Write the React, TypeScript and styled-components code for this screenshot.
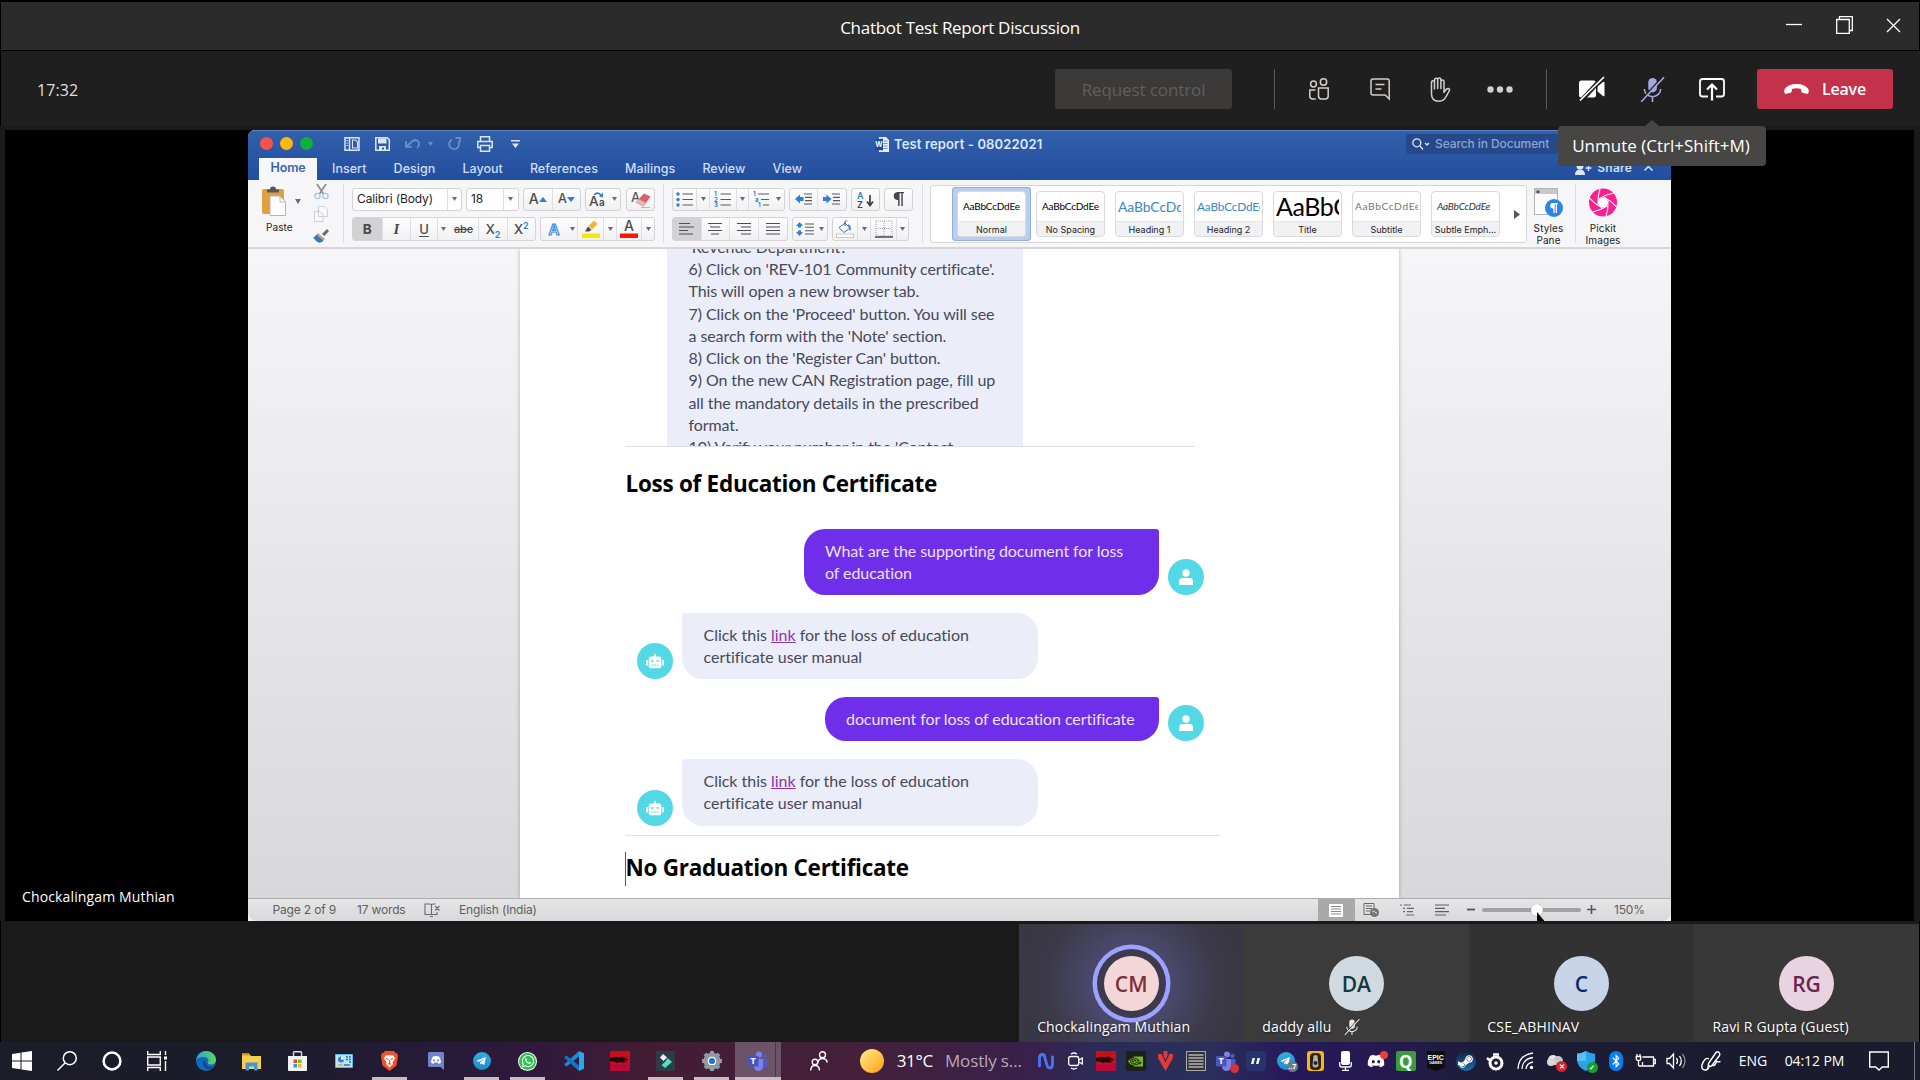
import React from 'react';
import styled, { createGlobalStyle, css } from 'styled-components';
import { FaBluetoothB, FaDiscord, FaRobot, FaSteamSymbol, FaTelegramPlane, FaWhatsapp } from 'react-icons/fa';
import { SiNvidia } from 'react-icons/si';

const segoe = '"Open Sans", "Noto Sans", sans-serif';
const sf = 'Inter, "Liberation Sans", sans-serif';
const lato = 'Lato, "Open Sans", sans-serif';

const Global = createGlobalStyle`
  *, *::before, *::after { box-sizing: border-box; }
  html, body { margin: 0; background: #000; }
  body { width: 1920px; height: 1080px; overflow: hidden; }
  svg { display: block; flex: none; }
`;

const Screen = styled.div`
  width: 1920px;
  height: 1080px;
  display: flex;
  flex-direction: column;
  background: #1a1a1a;
  font-family: ${segoe};
  color: #fff;
  overflow: hidden;
`;

const Glyph = styled.svg<{ $w: number; $h?: number }>`
  width: ${p => p.$w}px;
  height: ${p => p.$h ?? p.$w}px;
  overflow: visible;
`;

/* ---------- Meeting window ---------- */

const TitleBar = styled.header`
  height: 51px;
  flex: none;
  display: grid;
  grid-template-columns: 1fr auto 1fr;
  align-items: center;
  background: #2b2b2b;
  border: solid #000;
  border-width: 2px 1px 1px;
  font-size: 17px;
  letter-spacing: -0.27px;
  line-height: 24px;
`;

const WindowTitle = styled.div`
  grid-column: 2;
  padding-top: 4px;
`;

const WindowButtons = styled.div`
  display: flex;
  justify-content: flex-end;
  align-items: center;
  gap: 34px;
  padding: 0 19px 2px 0;
`;

const Toolbar = styled.div`
  height: 75px;
  flex: none;
  display: flex;
  align-items: center;
  padding: 1px 27px 0 36px;
  background: #1f1f1f;
  border-left: 1px solid #000;
`;

const Clock = styled.div`
  flex: 1;
  padding-top: 2px;
  font-size: 16px;
  letter-spacing: 0.1px;
  color: #e1dfdd;
`;

const RequestButton = styled.div`
  width: 177px;
  height: 40px;
  display: grid;
  place-items: center;
  border-radius: 3px;
  background: #3b3a39;
  color: #605e5c;
  font-size: 17px;
  letter-spacing: -0.11px;
`;

const Divider = styled.div<{ $l: number; $r: number }>`
  width: 1px;
  height: 40px;
  margin: 0 ${p => p.$r}px 0 ${p => p.$l}px;
  background: #5a5856;
`;

const ToolCell = styled.div<{ $w: number; $c?: string }>`
  position: relative;
  width: ${p => p.$w}px;
  height: 40px;
  display: grid;
  place-items: center;
  color: ${p => p.$c ?? '#d2d0ce'};
`;

const Tooltip = styled.div`
  position: absolute;
  z-index: 5;
  top: 57px;
  left: 50%;
  width: 208px;
  height: 40px;
  margin-left: -94px;
  padding: 0 2px 2px 0;
  display: grid;
  place-items: center;
  border-radius: 4px;
  background: #484644;
  color: #fff;
  font-size: 17px;
  white-space: nowrap;
  &::before {
    content: '';
    position: absolute;
    top: -6px;
    left: 87px;
    border: solid transparent;
    border-width: 0 7px 6px;
    border-bottom-color: #484644;
  }
`;

const LeaveButton = styled.div`
  width: 136px;
  height: 40px;
  margin-left: 15px;
  display: flex;
  align-items: center;
  justify-content: center;
  gap: 13px;
  border-radius: 3px;
  background: #c4314b;
  font-size: 16px;
  font-weight: 600;
  letter-spacing: -0.17px;
`;

const StageWrap = styled.div`
  height: 795px;
  flex: none;
  padding: 4px 6px 0 5px;
  background: #1a1a1a;
`;

const Stage = styled.div`
  height: 791px;
  display: grid;
  grid-template-columns: 243px 1423px;
  background: #000;
`;

const PresenterName = styled.div`
  align-self: end;
  padding: 0 0 13px 17px;
  font-size: 14px;
  line-height: 22px;
  letter-spacing: 0.14px;
`;

/* ---------- Word ---------- */

const Word = styled.div`
  height: 791px;
  display: flex;
  flex-direction: column;
  border-radius: 7px 0 0 0;
  overflow: hidden;
  background: #f3f3f3;
  font-family: ${sf};
`;

const WordHead = styled.div`
  height: 50px;
  flex: none;
  background: linear-gradient(#3360aa, #2551a1 80%, #234e9e);
  border-top: 1px solid #5a82c4;
`;

const WordTitleRow = styled.div`
  height: 26px;
  display: grid;
  grid-template-columns: 627px 1fr 264px;
  align-items: center;
`;

const QuickAccess = styled.div`
  display: flex;
  align-items: center;
  padding: 0 0 1px 12px;
  color: #dbe6fa;
`;

const Light = styled.i<{ $c: string }>`
  width: 13px;
  height: 13px;
  margin-right: 7px;
  border-radius: 50%;
  background: ${p => p.$c};
`;

const QuickIcon = styled.div<{ $gap: number; $dim?: boolean }>`
  margin-left: ${p => p.$gap}px;
  opacity: ${p => (p.$dim ? 0.38 : 1)};
`;

const DocName = styled.div`
  display: flex;
  align-items: center;
  gap: 5px;
  color: #dce8fc;
  font-size: 13px;
  font-weight: 600;
  letter-spacing: 0.14px;
  line-height: 18px;
`;

const SearchBox = styled.div`
  height: 20px;
  width: 248px;
  display: flex;
  align-items: center;
  gap: 5px;
  padding-left: 6px;
  margin: 0 0 1px -1px;
  border-radius: 3px;
  background: #27498a;
  color: #8ba4d3;
  font-size: 12px;
  font-weight: 500;
  letter-spacing: -0.1px;
`;

const TabRow = styled.div`
  height: 23px;
  display: flex;
  align-items: flex-end;
  padding: 0 18px 0 11px;
  font-size: 12.5px;
  font-weight: 500;
  line-height: 22px;
  color: #cfdcf5;
`;

const HomeTab = styled.div`
  width: 58px;
  height: 22px;
  margin-right: 15px;
  text-align: center;
  background: #f7f6f8;
  color: #3a62ad;
  font-weight: 600;
  letter-spacing: -0.19px;
  line-height: 20px;
`;

const Tab = styled.div`
  margin-right: 27.1px;
  line-height: 19px;
  padding-bottom: 2px;
  letter-spacing: 0.03px;
`;

const ShareLink = styled.div`
  margin-left: auto;
  display: flex;
  align-items: center;
  gap: 5px;
  font-size: 12px;
  font-weight: 600;
  letter-spacing: 0.2px;
  line-height: 20px;
  padding-bottom: 2px;
`;

const Ribbon = styled.div`
  height: 69px;
  flex: none;
  display: flex;
  background: #f6f5f7;
  border-bottom: 2px solid #d6d5d7;
  color: #1d1d1f;
`;

const PasteArea = styled.div`
  width: 95px;
  display: grid;
  grid-template-columns: 58px 30px;
  padding-top: 4px;
`;

const PasteButton = styled.div`
  display: grid;
  grid-template-columns: 26px 1fr;
  grid-template-rows: 33px 16px;
  padding: 2px 0 0 14px;
  column-gap: 7px;
  font-size: 10px;
  letter-spacing: 0.1px;
`;

const PasteLabel = styled.span`
  grid-column: 1 / 3;
  padding-left: 4px;
  line-height: 16px;
`;

const ClipTools = styled.div`
  display: flex;
  flex-direction: column;
  align-items: center;
  gap: 7px;
`;

const RibbonGroup = styled.div<{ $w: number }>`
  width: ${p => p.$w}px;
  display: flex;
  flex-direction: column;
  gap: 6px;
  padding: 7.5px 0 0 8px;
`;

const Line = styled.div`
  display: flex;
`;

const RibbonRule = styled.div`
  width: 1px;
  margin: 4px 0;
  background: #dddcdf;
`;

const Control = styled.div<{ $w: number; $ml?: number; $white?: boolean }>`
  width: ${p => p.$w}px;
  height: 23.5px;
  margin-left: ${p => p.$ml ?? 0}px;
  display: flex;
  border: 1px solid #d3d2d4;
  border-radius: 3px;
  background: ${p => (p.$white ? '#fff' : 'linear-gradient(#fefefe, #f1f0f2)')};
  overflow: hidden;
  font-size: 12px;
  letter-spacing: -0.12px;
  line-height: 20px;
`;

const Seg = styled.div<{ $w?: number; $on?: boolean; $line?: boolean; $start?: boolean }>`
  ${p => (p.$w ? css`width: ${p.$w}px;` : css`flex: 1;`)}
  display: flex;
  align-items: center;
  justify-content: ${p => (p.$start ? 'flex-start' : 'center')};
  padding-left: ${p => (p.$start ? 4 : 0)}px;
  background: ${p => (p.$on ? '#d2d1d3' : 'transparent')};
  border-left: ${p => (p.$line ? '1px solid #dfdee0' : '0')};
`;

const Letter = styled.span<{ $s?: number; $b?: boolean; $i?: boolean; $u?: boolean; $k?: boolean }>`
  font-size: ${p => p.$s ?? 14}px;
  line-height: 16px;
  font-weight: ${p => (p.$b ? 700 : 500)};
  font-style: ${p => (p.$i ? 'italic' : 'normal')};
  font-family: ${p => (p.$i ? '"Liberation Serif", serif' : 'inherit')};
  text-decoration: ${p => (p.$u ? 'underline' : p.$k ? 'line-through' : 'none')};
  text-underline-offset: 2px;
  color: #4a4a4c;
  sub, sup { font-size: 9px; line-height: 0; color: #2f7fd6; font-weight: 600; }
`;

const Gallery = styled.div`
  width: 597px;
  height: 58px;
  margin: 5px 0 0 7px;
  display: flex;
  align-items: center;
  padding-left: 21px;
  border: 1px solid #d6d5d7;
  border-radius: 3px;
  background: #fff;
`;

const StyleTile = styled.div<{ $on?: boolean }>`
  width: 79px;
  height: 54px;
  padding: 4px 5px;
  border-radius: 4px;
  background: ${p => (p.$on ? '#b9cdec' : 'transparent')};
  box-shadow: ${p => (p.$on ? 'inset 0 0 0 1px #92aede' : 'none')};
`;

const StyleCard = styled.div`
  height: 46px;
  border: 1px solid #d9d8da;
  border-radius: 4px;
  overflow: hidden;
  background: #fff;
`;

const Sample = styled.div<{ $s: number; $c: string; $ls: number; $i?: boolean }>`
  height: 29px;
  margin: 0 2px;
  padding-left: ${p => (p.$s === 10 ? 3 : 0)}px;
  overflow: hidden;
  white-space: nowrap;
  font-family: ${lato};
  font-size: ${p => p.$s}px;
  letter-spacing: ${p => p.$ls}px;
  font-style: ${p => (p.$i ? 'italic' : 'normal')};
  line-height: 29px;
  color: ${p => p.$c};
`;

const StyleLabel = styled.div`
  height: 15px;
  background: #f1f0f2;
  border-top: 1px solid #e6e5e7;
  text-align: center;
  white-space: nowrap;
  font-size: 9px;
  line-height: 15px;
`;

const BigButton = styled.div<{ $w: number; $pr?: number }>`
  width: ${p => p.$w}px;
  display: flex;
  flex-direction: column;
  align-items: center;
  padding: 8px ${p => p.$pr ?? 0}px 0 0;
  text-align: center;
  font-size: 10px;
  letter-spacing: 0.12px;
  line-height: 12px;
  gap: 4.5px;
`;

const Canvas = styled.div`
  height: 649px;
  flex: none;
  padding-left: 272px;
  background: linear-gradient(#f6f5f7, #e6e5e8 50%, #d8d7da);
  overflow: hidden;
`;

const Page = styled.main`
  width: 879px;
  height: 649px;
  padding-left: 105.5px;
  background: #fff;
  box-shadow: 0 0 4px rgba(0, 0, 0, 0.28);
  font-family: ${lato};
  overflow: hidden;
`;

const Excerpt = styled.div`
  width: 356px;
  height: 197px;
  margin-left: 41px;
  padding-left: 22px;
  overflow: hidden;
  background: #ebedf8;
  color: #46495a;
  font-size: 16px;
  line-height: 22.24px;
  letter-spacing: -0.08px;
  white-space: nowrap;
`;

const ExcerptText = styled.div`
  margin-top: -13px;
`;

const Hairline = styled.div<{ $w: number }>`
  width: ${p => p.$w}px;
  height: 1px;
  background: #dfdfea;
`;

const Heading = styled.h2<{ $top: number; $caret?: boolean }>`
  height: 34px;
  margin: ${p => p.$top}px 0 0 0;
  font-family: ${segoe};
  font-size: 22.5px;
  font-weight: 700;
  letter-spacing: -0.28px;
  line-height: 32px;
  color: #000;
  box-shadow: ${p => (p.$caret ? '-1px 0 0 #555' : 'none')};
  width: max-content;
`;

const Chat = styled.div`
  width: 578.5px;
  margin-top: 26.5px;
  margin-bottom: 9.5px;
  display: flex;
  flex-direction: column;
  gap: 17.7px;
`;

const Message = styled.div<{ $user?: boolean }>`
  display: flex;
  align-items: flex-end;
  justify-content: ${p => (p.$user ? 'flex-end' : 'flex-start')};
  gap: 9px;
  padding-left: ${p => (p.$user ? 0 : 11.5)}px;
`;

const Bubble = styled.div<{ $user?: boolean; $w: number }>`
  width: ${p => p.$w}px;
  padding: 11px 0 11px 21.5px;
  border-radius: ${p => (p.$user ? '21px 3px 21px 21px' : '3px 21px 21px 21px')};
  background: ${p => (p.$user ? '#6f2eea' : '#ebedf8')};
  color: ${p => (p.$user ? '#ece3fd' : '#46495a')};
  font-size: 16px;
  line-height: 22.3px;
  letter-spacing: ${p => (p.$user ? -0.08 : -0.02)}px;
  white-space: nowrap;
`;

const DocLink = styled.span`
  color: #8a35a8;
  text-decoration: underline;
`;

const ChatAvatar = styled.div`
  width: 36px;
  height: 36px;
  display: grid;
  place-items: center;
  border-radius: 50%;
  background: #53d9e6;
  color: #fff;
`;

const StatusBar = styled.footer`
  height: 23px;
  flex: none;
  display: flex;
  align-items: center;
  padding-left: 24.5px;
  border-top: 1px solid #adacae;
  border-radius: 0 0 9px 9px;
  background: linear-gradient(#e6e5e6, #d9d8da);
  color: #5e5e60;
  font-size: 12px;
  letter-spacing: -0.17px;
  line-height: 20px;
`;

const StatusItem = styled.span<{ $w: number }>`
  width: ${p => p.$w}px;
  padding-bottom: 1px;
  white-space: nowrap;
`;

const ViewButton = styled.div<{ $w: number; $on?: boolean }>`
  width: ${p => p.$w}px;
  height: 22px;
  display: grid;
  place-items: center;
  background: ${p => (p.$on ? '#a9a8ab' : 'transparent')};
`;

const Zoom = styled.div`
  display: flex;
  align-items: center;
  gap: 6px;
  margin-left: 8px;
  padding-bottom: 1px;
`;

const ZoomTrack = styled.div`
  position: relative;
  width: 99px;
  height: 4px;
  border-radius: 2px;
  background: #a2a1a4;
`;

const ZoomThumb = styled.i`
  position: absolute;
  left: 49px;
  top: -4px;
  width: 12px;
  height: 12px;
  border-radius: 50%;
  background: #fff;
  box-shadow: 0 0 1px rgba(0, 0, 0, 0.4);
`;

const Pointer = styled(Glyph)`
  position: absolute;
  left: 55px;
  top: 4px;
`;

const ZoomText = styled.span`
  margin-left: 12.5px;
`;

/* ---------- Participants ---------- */

const Strip = styled.section`
  height: 121px;
  flex: none;
  display: flex;
  justify-content: flex-end;
  padding: 3px 0 0;
  border: solid #000;
  border-width: 0 1px;
`;

const Tile = styled.div<{ $bg: string }>`
  position: relative;
  width: 225.1px;
  height: 118px;
  display: flex;
  flex-direction: column;
  align-items: center;
  padding-top: 32px;
  background: ${p => p.$bg};
`;

const Initials = styled.div<{ $bg: string; $c: string; $ring?: boolean }>`
  width: 55px;
  height: 55px;
  flex: none;
  display: grid;
  place-items: center;
  border-radius: 50%;
  background: ${p => p.$bg};
  color: ${p => p.$c};
  font-size: 21px;
  font-weight: 600;
  box-shadow: ${p => (p.$ring ? '0 0 0 7px #3c3a4c, 0 0 0 11.5px #9ea2ff' : 'none')};
`;

const TileName = styled.div`
  position: relative;
  align-self: stretch;
  display: flex;
  align-items: center;
  gap: 13px;
  padding-left: 18.5px;
  margin-top: 6px;
  font-size: 14px;
  line-height: 20px;
  letter-spacing: 0.16px;
  text-shadow: 0 1px 2px rgba(0, 0, 0, 0.6);
`;

/* ---------- Taskbar ---------- */

const Taskbar = styled.nav`
  height: 38px;
  flex: none;
  display: flex;
  align-items: stretch;
  background: linear-gradient(90deg, #1b1d28 0, #1c1c2a 260px, #251b38 420px, #30193c 540px, #431c34 640px, #44203a 860px, #39204a 1020px, #2a2c58 1110px, #2b2f5a 1210px, #26195a 1290px, #251a50 1380px, #1c1c36 1490px, #1a1b2b 1920px);
`;

const SystemButtons = styled.div`
  display: grid;
  grid-template-columns: repeat(4, 45.2px);
  width: 182.5px;
`;

const Apps = styled.div`
  display: grid;
  grid-template-columns: repeat(13, 46.03px);
`;

const AppSlot = styled.div<{ $run?: boolean; $active?: boolean }>`
  display: grid;
  place-items: center;
  color: #fff;
  ${p => p.$run && css`background: linear-gradient(#c9bdbf, #c9bdbf) 50% 100% / 35px 3px no-repeat;`}
  ${p => p.$active && css`
    background: linear-gradient(#c9bdbf, #c9bdbf) 50% 100% / 100% 3px no-repeat,
      linear-gradient(90deg, #6d5367 40px, #4d3547 40px, #4d3547 41px, #6d5367 41px);
  `}
`;

const People = styled.div`
  width: 79px;
  padding-right: 2px;
  display: grid;
  place-items: center;
`;

const Weather = styled.div`
  width: 171px;
  display: flex;
  align-items: center;
  font-size: 17px;
  letter-spacing: -0.3px;
  line-height: 38px;
  white-space: nowrap;
`;

const Sun = styled.i`
  width: 24px;
  height: 24px;
  margin-right: 13px;
  border-radius: 50%;
  background: linear-gradient(135deg, #ffe680 10%, #ffa51c 90%);
`;

const Forecast = styled.span`
  margin-left: 12px;
  letter-spacing: -0.14px;
  color: #b7aab4;
`;

const Tray = styled.div`
  display: grid;
  grid-template-columns: repeat(22, 30px);
`;

const SquareIcon = styled.div<{ $s: number; $bg: string; $r?: number; $c?: string; $fs?: number }>`
  width: ${p => p.$s}px;
  height: 20px;
  display: grid;
  place-items: center;
  border-radius: ${p => p.$r ?? 0}px;
  background: ${p => p.$bg};
  color: ${p => p.$c ?? '#fff'};
  font-size: ${p => p.$fs ?? 14}px;
  font-weight: 700;
  line-height: 1;
`;

const Disc = styled(SquareIcon)`
  height: ${p => p.$s}px;
  border-radius: 50%;
`;

const Badged = styled.div`
  position: relative;
`;

const Badge = styled.i<{ $bg: string; $s: number; $top?: boolean }>`
  position: absolute;
  right: -3px;
  ${p => (p.$top ? 'top: -1px;' : 'bottom: -2px;')}
  width: ${p => p.$s}px;
  height: ${p => p.$s}px;
  display: grid;
  place-items: center;
  border-radius: 50%;
  background: ${p => p.$bg};
  color: #fff;
  font: 700 7px ${segoe};
`;

const Epic = styled.div`
  width: 18px;
  height: 20px;
  padding-top: 3px;
  background: #0c0c0c;
  clip-path: polygon(0 0, 100% 0, 100% 82%, 50% 100%, 0 82%);
  text-align: center;
  font: 700 7px/7px "Liberation Sans", sans-serif;
  small { display: block; font-size: 3.5px; line-height: 5px; }
`;

const Pen = styled.div`
  width: 40px;
  display: grid;
  place-items: center;
`;

const Lang = styled.div`
  width: 54px;
  padding-left: 8px;
  font-size: 14px;
  line-height: 38px;
`;

const Time = styled.div`
  width: 77px;
  font-size: 14px;
  letter-spacing: -0.1px;
  line-height: 38px;
`;

const Notify = styled.div`
  flex: 1;
  display: flex;
  align-items: center;
  padding-left: 7px;
  border-right: 1px solid #777985;
  margin-right: 5px;
`;

/* ---------- Drawings ---------- */

const Caret = ({ w = 6, c = '#6a6a6c' }: { w?: number; c?: string }) => (
  <Glyph $w={w} $h={w * 0.8} viewBox="0 0 8 6.4"><path d="M0 0h8L4 6.400z" fill={c} /></Glyph>
);

const MicOff = ({ size, c }: { size: number; c: string }) => (
  <Glyph $w={size} viewBox="0 0 26 26" fill="none" stroke={c} strokeWidth="1.7">
    <rect x="8.6" y="1" width="9" height="15" rx="4.5" fill={c} stroke="none" />
    <path d="M4.5 12.5a8.5 8 0 0 0 17 0M13 20.5V26" />
    <path d="M24 -1 1 24.500" stroke="#1f1f1f" strokeWidth="1.500" />
    <path d="M25 .3 1.3 25.8" />
  </Glyph>
);

const Rows = ({ l }: { l: number[][] }) => (
  <Glyph $w={16} $h={14} viewBox="0 0 16 14" stroke="#4f4f51" strokeWidth="1.2">
    {l.map(([a, b], i) => <path key={i} d={`M${a} ${1.5 + i * 3.5}H${b}`} />)}
  </Glyph>
);

const ListIcon = ({ kind }: { kind: 'dot' | 'num' | 'tree' }) => (
  <Glyph $w={18} $h={15} viewBox="0 0 18 15">
    {kind === 'tree'
      ? <path d="M6 2h11M9 7.5h8M11 13h6" stroke="#5a5a5c" strokeWidth="1.2" />
      : <path d="M6.5 2H17M6.5 7.5H17M6.5 13H17" stroke="#5a5a5c" strokeWidth="1.2" />}
    {kind === 'dot' && <g fill="#2f7fd6"><circle cx="2" cy="2" r="1.7" /><circle cx="2" cy="7.5" r="1.7" /><circle cx="2" cy="13" r="1.7" /></g>}
    {kind === 'num' && <g fill="#2f7fd6" fontSize="6" fontFamily="Inter" fontWeight="700"><text x="0" y="4">1</text><text x="0" y="9.5">2</text><text x="0" y="15">3</text></g>}
    {kind === 'tree' && <g fill="#2f7fd6" fontSize="6" fontFamily="Inter" fontWeight="700"><text x="1" y="4">1</text><text x="3" y="9.5">a</text><text x="6" y="15">1</text></g>}
  </Glyph>
);

const IndentIcon = ({ left }: { left?: boolean }) => (
  <Glyph $w={17} $h={12} viewBox="0 0 17 12">
    <path d="M9 1h8M10 4.3h7M10 7.6h7M9 11h8" stroke="#5a5a5c" strokeWidth="1.2" />
    <path d={left ? 'M0 6 5 1.5V4h3.5v4H5v2.5z' : 'M8.5 6l-5-4.5V4H0v4h3.5v2.5z'} fill="#2f7fd6" />
  </Glyph>
);

const Dragon = () => (
  <Glyph $w={20} viewBox="0 0 20 20">
    <rect width="20" height="20" fill="#c80e18" />
    <path d="M0 13h20v7H0z" fill="#b80a36" />
    <path d="M0 7l6-1.200 3 .8 3-1 4.500 2 1.500 2-4-.4 3 2.600-4-1.200 1 1.500-4-1.200-3 1-3-1.300L0 10.500z" fill="#1c0a0c" />
  </Glyph>
);

const TeamsLogo = () => (
  <Glyph $w={20} viewBox="0 0 20 20">
    <circle cx="16.5" cy="5" r="2.2" fill="#5059c9" />
    <circle cx="11" cy="3.6" r="3" fill="#7b83eb" />
    <path d="M13 8h6.5v5.5a3.3 3.3 0 0 1-5 2.6z" fill="#5059c9" />
    <path d="M6 8h9v7.5a4.5 4.5 0 0 1-9 0z" fill="#7b83eb" />
    <rect x="0" y="5" width="10.5" height="10.5" rx="1" fill="#4b53bc" />
    <text x="5.2" y="13.4" fontSize="9" fontWeight="700" textAnchor="middle" fill="#fff" fontFamily="Open Sans">T</text>
  </Glyph>
);

const Telegram = ({ s }: { s: number }) => (
  <Disc $s={s} $bg="linear-gradient(#35ade0, #1c8cc8)"><FaTelegramPlane size={s * 0.58} /></Disc>
);

const Robot = () => (
  <ChatAvatar><FaRobot size={18} /></ChatAvatar>
);

const Person = () => (
  <ChatAvatar>
    <Glyph $w={14} $h={16} viewBox="0 0 14 16" fill="#fff"><circle cx="7" cy="4" r="3.7" /><path d="M0 16v-3.6Q0 9 3.4 9h7.2Q14 9 14 12.4V16z" /></Glyph>
  </ChatAvatar>
);

const STYLES = [
  { n: 'Normal', t: 'AaBbCcDdEe', s: 10, c: '#000', ls: -0.19 },
  { n: 'No Spacing', t: 'AaBbCcDdEe', s: 10, c: '#000', ls: -0.19 },
  { n: 'Heading 1', t: 'AaBbCcDd', s: 13.9, c: '#3b86cc', ls: -0.1 },
  { n: 'Heading 2', t: 'AaBbCcDdEe', s: 11.8, c: '#3b86cc', ls: -0.15 },
  { n: 'Title', t: 'AaBbC', s: 25, c: '#000', ls: -0.4 },
  { n: 'Subtitle', t: 'AaBbCcDdEe', s: 10.2, c: '#777', ls: 0.6 },
  { n: 'Subtle Emph...', t: 'AaBbCcDdEe', s: 10, c: '#333', ls: -0.19, i: true },
];

const EXCERPT = [
  "'Revenue Department'.",
  "6) Click on 'REV-101 Community certificate'.",
  'This will open a new browser tab.',
  "7) Click on the 'Proceed' button. You will see",
  "a search form with the 'Note' section.",
  "8) Click on the 'Register Can' button.",
  '9) On the new CAN Registration page, fill up',
  'all the mandatory details in the prescribed',
  'format.',
  "10) Verify your number in the 'Contact",
];

const PEOPLE = [
  { n: 'Chockalingam Muthian', i: 'CM', bg: '#f3d6d8', c: '#7d3038', tile: 'radial-gradient(circle at 50% 50%, #55558a 0, #484768 45px, #3c3a48 85px, #393743 110px)', ring: true },
  { n: 'daddy allu', i: 'DA', bg: '#d0dae0', c: '#123840', tile: '#3b3b3b', muted: true },
  { n: 'CSE_ABHINAV', i: 'C', bg: '#c8d4e8', c: '#0a2a66', tile: '#323232' },
  { n: 'Ravi R Gupta (Guest)', i: 'RG', bg: '#ead3e0', c: '#6b2350', tile: '#383838' },
];

const BotReply = () => (
  <Message>
    <Robot />
    <Bubble $w={356}>Click this <DocLink>link</DocLink> for the loss of education<br />certificate user manual</Bubble>
  </Message>
);

const RibbonBar = () => (
  <Ribbon>
    <PasteArea>
      <PasteButton>
        <Glyph $w={24} $h={30} viewBox="0 0 24 30">
          <rect x="0" y="3" width="22" height="25" rx="2" fill="#e0a040" />
          <path d="M5 6.5V3.5h3a3 3 0 0 1 6 0h3v3z" fill="#55565a" />
          <path d="M8 10h10l5.5 6v13.5H8z" fill="#fff" stroke="#b5b5b7" />
          <path d="M18 10v6h5.5" fill="none" stroke="#b5b5b7" />
        </Glyph>
        <Glyph $w={6} $h={34} viewBox="0 0 6 34"><path d="M0 13h6l-3 5z" fill="#6a6a6c" /></Glyph>
        <PasteLabel>Paste</PasteLabel>
      </PasteButton>
      <ClipTools>
        <Glyph $w={15} viewBox="0 0 15 15" fill="none">
          <path d="M3 0l6.5 10M12 0 5.5 10" stroke="#8a8a8c" strokeWidth="1.6" />
          <circle cx="3.5" cy="12" r="2.6" stroke="#a9c4e6" strokeWidth="1.3" /><circle cx="11.5" cy="12" r="2.6" stroke="#a9c4e6" strokeWidth="1.3" />
        </Glyph>
        <Glyph $w={14} $h={16} viewBox="0 0 14 16" fill="#fafafa" stroke="#cfcfd1">
          <path d="M4.500 .5h6l3 3v7h-9zM.5 5.500h5.500l3 3v7H.5z" />
        </Glyph>
        <Glyph $w={16} $h={14} viewBox="0 0 16 14">
          <path d="M9 5l5-5 2 2-4.500 5z" fill="#6b6b6e" /><path d="M5 4l7 6-1.500 1.500-7-6z" fill="#c9a25e" /><path d="M3.500 5.500l7 6Q8 14.500 5.500 13.500T0 8.500q2-.5 3.500-3z" fill="#3f76b8" />
        </Glyph>
      </ClipTools>
    </PasteArea>
    <RibbonRule />
    <RibbonGroup $w={319}>
      <Line>
        <Control $w={110} $white><Seg $start>Calibri (Body)</Seg><Seg $w={14} $line><Caret w={5} /></Seg></Control>
        <Control $w={52.5} $ml={4} $white><Seg $start>18</Seg><Seg $w={15} $line><Caret w={5} /></Seg></Control>
        <Control $w={58} $ml={4.5}>
          <Seg><Letter $s={14}>A</Letter><Glyph $w={8} $h={5} viewBox="0 0 8 5"><path d="M0 5l4-5 4 5z" fill="#2f7fd6" /></Glyph></Seg>
          <Seg $line><Letter $s={12.5}>A</Letter><Glyph $w={8} $h={5} viewBox="0 0 8 5"><path d="M0 0h8L4 5z" fill="#2f7fd6" /></Glyph></Seg>
        </Control>
        <Control $w={36} $ml={4}>
          <Seg>
            <Glyph $w={17} $h={15} viewBox="0 0 17 15">
              <text x="0" y="14" fontSize="13.500" fill="#4a4a4c" fontFamily="Inter" fontWeight="500">A</text>
              <text x="10" y="14" fontSize="10" fill="#4a4a4c" fontFamily="Inter" fontWeight="600">a</text>
              <path d="M5 3q4-4 7 .5" fill="none" stroke="#2f7fd6" strokeWidth="1.6" /><path d="M14 .5v5l-4-1z" fill="#2f7fd6" />
            </Glyph>
          </Seg>
          <Seg $w={11}><Caret w={5} /></Seg>
        </Control>
        <Control $w={29} $ml={5}>
          <Seg>
            <Glyph $w={20} $h={18} viewBox="0 0 20 18">
              <text x="0" y="12" fontSize="13" fill="#5a5a5c" fontFamily="Inter" fontWeight="500">A</text>
              <path d="M13 3.500 19.500 6.500l-7 10-8-4z" fill="#d9606f" /><path d="M7.500 9l7.500 3.800-2.500 3.700-8-4z" fill="#f0b0b6" /><path d="M10 17.500h9" stroke="#aaa" strokeWidth=".8" />
            </Glyph>
          </Seg>
        </Control>
      </Line>
      <Line>
        <Control $w={183.5}>
          <Seg $w={28.5} $on><Letter $b $s={13.5}>B</Letter></Seg>
          <Seg $w={28.5} $line><Letter $i $b $s={15}>I</Letter></Seg>
          <Seg $w={27} $line><Letter $u $s={13}>U</Letter></Seg>
          <Seg $w={12} $line><Caret w={5} /></Seg>
          <Seg $w={29}><Letter $k $s={11}>abc</Letter></Seg>
          <Seg $w={29} $line><Letter $s={13}>X<sub>2</sub></Letter></Seg>
          <Seg $line><Letter $s={13}>X<sup>2</sup></Letter></Seg>
        </Control>
        <Control $w={115} $ml={4.5}>
          <Seg $w={26}>
            <Glyph $w={14} viewBox="0 0 14 14"><text x="7" y="13" textAnchor="middle" fontSize="15" fontWeight="600" fontFamily="Inter" fill="#fff" stroke="#3d8ee0" strokeWidth="1.2">A</text></Glyph>
          </Seg>
          <Seg $w={10}><Caret w={5} /></Seg>
          <Seg $w={26} $line>
            <Glyph $w={18} $h={18} viewBox="0 0 18 18"><rect y="13.500" width="18" height="4.500" fill="#f7ea00" /><path d="M6.500 6 12 .5 15.500 4 10 9.500z" fill="#f2b53c" /><path d="M6 6.500 9.500 10 7 11.500H3z" fill="#4a4a4c" /></Glyph>
          </Seg>
          <Seg $w={13} $line><Caret w={5} /></Seg>
          <Seg $line>
            <Glyph $w={18} $h={18} viewBox="0 0 18 18"><rect y="13.500" width="18" height="4.500" fill="#fb1604" /><text x="9" y="11" textAnchor="middle" fontSize="14" fontWeight="500" fontFamily="Inter" fill="#4a4a4c">A</text></Glyph>
          </Seg>
          <Seg $w={13} $line><Caret w={5} /></Seg>
        </Control>
      </Line>
    </RibbonGroup>
    <RibbonRule />
    <RibbonGroup $w={258}>
      <Line>
        <Control $w={112.5}>
          <Seg $w={23}><ListIcon kind="dot" /></Seg><Seg $w={13} $line><Caret w={5} /></Seg>
          <Seg $w={27} $line><ListIcon kind="num" /></Seg><Seg $w={12} $line><Caret w={5} /></Seg>
          <Seg $w={25} $line><ListIcon kind="tree" /></Seg><Seg><Caret w={5} /></Seg>
        </Control>
        <Control $w={58} $ml={4}><Seg><IndentIcon left /></Seg><Seg $line><IndentIcon /></Seg></Control>
        <Control $w={29} $ml={4}>
          <Seg>
            <Glyph $w={17} $h={17} viewBox="0 0 17 17">
              <text x="0" y="7.500" fontSize="9" fill="#2f7fd6" fontFamily="Inter" fontWeight="600">A</text>
              <text x="0" y="17" fontSize="9" fill="#4a4a4c" fontFamily="Inter" fontWeight="600">Z</text>
              <path d="M13 4v10M10 10.500l3 4 3-4" fill="none" stroke="#3e3e40" strokeWidth="1.7" />
            </Glyph>
          </Seg>
        </Control>
        <Control $w={29.5} $ml={4}>
          <Seg><Glyph $w={11} $h={14} viewBox="0 0 11 14"><path d="M4.500 0H11v1.300H9.800V14H8.300V1.300H6.600V14H5.100V8A4 4 0 0 1 4.500 0z" fill="#4a4a4c" /></Glyph></Seg>
        </Control>
      </Line>
      <Line>
        <Control $w={115.5}>
          <Seg $on><Rows l={[[0, 11], [0, 15], [0, 9], [0, 14]]} /></Seg>
          <Seg $line><Rows l={[[1, 15], [3, 13], [1, 15], [4, 12]]} /></Seg>
          <Seg $line><Rows l={[[1, 15], [5, 15], [1, 15], [5, 15]]} /></Seg>
          <Seg $line><Rows l={[[1, 15], [1, 15], [1, 15], [1, 15]]} /></Seg>
        </Control>
        <Control $w={36} $ml={4.5}>
          <Seg>
            <Glyph $w={18} $h={14} viewBox="0 0 18 14"><path d="M3.500 0 7 4H5v1.500H2V4H0zM3.500 14 7 10H5V8.500H2V10H0z" fill="#2f7fd6" /><path d="M9 2h9M9 5.300h9M9 8.700h9M9 12h9" stroke="#5a5a5c" strokeWidth="1.100" /></Glyph>
          </Seg>
          <Seg $w={11}><Caret w={5} /></Seg>
        </Control>
        <Control $w={77} $ml={4}>
          <Seg $w={24}>
            <Glyph $w={18} $h={18} viewBox="0 0 18 18"><rect x=".5" y="14" width="17" height="3.500" fill="#fff" stroke="#c9c9cb" /><path d="M3 7.500 9 3l5 5-6 4.500z" fill="#fff" stroke="#4a6b96" /><path d="M9 6V1.500q1-2 2 0" fill="none" stroke="#4a4a4c" /><path d="M12 4q4 2 2.500 7-2-2-2.500-7z" fill="#3d86d8" /></Glyph>
          </Seg>
          <Seg $w={13} $line><Caret w={5} /></Seg>
          <Seg $w={26} $line>
            <Glyph $w={18} $h={18} viewBox="0 0 18 18"><path d="M1 1h16v15H1zM9 1v15M1 8.500h16" fill="none" stroke="#a5a5a7" strokeDasharray="1 1" /><path d="M0 17h18" stroke="#4a4a4c" strokeWidth="1.500" /></Glyph>
          </Seg>
          <Seg $line><Caret w={5} /></Seg>
        </Control>
      </Line>
    </RibbonGroup>
    <RibbonRule />
    <Gallery>
      {STYLES.map((t, i) => (
        <StyleTile key={t.n} $on={i === 0}>
          <StyleCard>
            <Sample $s={t.s} $c={t.c} $ls={t.ls} $i={t.i}>{t.t}</Sample>
            <StyleLabel>{t.n}</StyleLabel>
          </StyleCard>
        </StyleTile>
      ))}
      <Glyph $w={15} $h={9} viewBox="-9 0 15 9"><path d="M0 0l6 4.500L0 9z" fill="#555" /></Glyph>
    </Gallery>
    <BigButton $w={48} $pr={5}>
      <Glyph $w={29} viewBox="0 0 29 29">
        <rect x=".5" y=".5" width="23" height="26" fill="#fcfcfc" stroke="#b4b4b6" /><rect x="1" y="1" width="22" height="5" fill="#c8c8ca" /><rect x="2.500" y="2.500" width="3" height="2.500" fill="#55565a" />
        <circle cx="20" cy="20" r="9" fill="#2c86e6" /><path d="M18.500 15H24v1.300h-1V25h-1.300v-8.700h-1V25h-1.300v-4.600a2.700 2.700 0 0 1-.9-5.400z" fill="#fff" />
      </Glyph>
      <span>Styles<br />Pane</span>
    </BigButton>
    <RibbonRule />
    <BigButton $w={54}>
      <Glyph $w={28} $h={29} viewBox="-14 -14 28 28">
        <circle r="14" fill="#fb2090" />
        <circle r="5" fill="#fff" />
        {[0, 60, 120, 180, 240, 300].map(a => (
          <path key={a} transform={`rotate(${a})`} d="M-4 -3.500Q3 -8 10.500 -9.500" fill="none" stroke="#fff" strokeWidth="1.100" />
        ))}
      </Glyph>
      <span>Pickit<br />Images</span>
    </BigButton>
  </Ribbon>
);

const WordHeader = () => (
  <WordHead>
    <WordTitleRow>
      <QuickAccess>
        <Light $c="#fc5148" /><Light $c="#fdb80a" /><Light $c="#10b13a" />
        <QuickIcon $gap={24}>
          <Glyph $w={16} $h={14} viewBox="0 0 16 14" fill="none" stroke="currentColor" strokeWidth="1.500"><path d="M1 .8h14v12.400H1zM5.500 1v12" /><path d="M8.500 3h3l2 2v6h-5z" strokeWidth="1.100" /><path d="M2.500 3.500h1.500M2.500 6h1.500M2.500 8.500h1.500" strokeWidth="1" /></Glyph>
        </QuickIcon>
        <QuickIcon $gap={15}>
          <Glyph $w={15} $h={14} viewBox="0 0 15 14"><path d="M.8.8h11.500l2 2v10.500H.8z" fill="none" stroke="currentColor" strokeWidth="1.500" /><path d="M3 1.500h8.500v5H3zM4 9h7v4.500H9V10.500H7v3H4z" fill="currentColor" /></Glyph>
        </QuickIcon>
        <QuickIcon $gap={15} $dim>
          <Glyph $w={15} $h={12} viewBox="0 0 15 12" fill="none" stroke="currentColor" strokeWidth="1.700"><path d="M1 3v6h6M1.500 8.500 7 3.500Q11 .5 13.300 3.500T12 10" /></Glyph>
        </QuickIcon>
        <QuickIcon $gap={8} $dim><Caret w={5} c="currentColor" /></QuickIcon>
        <QuickIcon $gap={14.5} $dim>
          <Glyph $w={13} $h={13} viewBox="0 0 13 13" fill="none" stroke="currentColor" strokeWidth="1.700"><path d="M4 2.500A5 5 0 1 0 10.500 4.500M7.500.8H12V5" /></Glyph>
        </QuickIcon>
        <QuickIcon $gap={16}>
          <Glyph $w={16} $h={16} viewBox="0 0 16 16" fill="none" stroke="currentColor" strokeWidth="1.500"><path d="M3.500 5V.8h9V5M3.500 11.500H.8V5.500h14.400v6h-2.700M3.500 9.500h9v5.700h-9z" /></Glyph>
        </QuickIcon>
        <QuickIcon $gap={18.5}>
          <Glyph $w={9} $h={8} viewBox="0 0 9 8"><path d="M0 0h9v1.500H0zM1 3.500h7L4.500 8z" fill="currentColor" /></Glyph>
        </QuickIcon>
      </QuickAccess>
      <DocName>
        <Glyph $w={14} $h={15} viewBox="0 0 14 15"><path d="M4 0h7l3 3v12H4z" fill="#e8effa" /><path d="M8.500 4h4M8.500 6.500h4M8.500 9h4M8.500 11.500h4" stroke="#6f8fc4" /><path d="M0 2.500 8 1.500v12L0 12.500z" fill="#1f4c96" /><text x="4" y="10" fontSize="7" fontWeight="700" textAnchor="middle" fill="#fff" fontFamily="Inter">W</text></Glyph>
        Test report - 08022021
      </DocName>
      <SearchBox>
        <Glyph $w={18} $h={12} viewBox="0 0 18 12" fill="none" stroke="#dbe6fa" strokeWidth="1.300"><circle cx="4.800" cy="4.800" r="4" /><path d="M7.800 7.800 11 11.500M13 5l2 2 2-2" /></Glyph>
        Search in Document
      </SearchBox>
    </WordTitleRow>
    <TabRow>
      <HomeTab>Home</HomeTab>
      {['Insert', 'Design', 'Layout', 'References', 'Mailings', 'Review', 'View'].map(t => <Tab key={t}>{t}</Tab>)}
      <ShareLink>
        <Glyph $w={17} $h={13} viewBox="0 0 17 13"><circle cx="5" cy="4" r="3.500" fill="#dbe6fa" /><path d="M0 13q0-5.500 5-5.500t5 5.500z" fill="#dbe6fa" /><path d="M13.500 3v6M10.500 6h6" stroke="#dbe6fa" strokeWidth="1.400" /></Glyph>
        Share
        <Glyph $w={16} $h={6} viewBox="-7 0 16 6" fill="none" stroke="#cfdcf5" strokeWidth="1.700"><path d="M.5 5.500l4-4 4 4" /></Glyph>
      </ShareLink>
    </TabRow>
  </WordHead>
);

const WordStatus = () => (
  <StatusBar>
    <StatusItem $w={84.5}>Page 2 of 9</StatusItem>
    <StatusItem $w={67}>17 words</StatusItem>
    <StatusItem $w={35}>
      <Glyph $w={17} $h={14} viewBox="0 0 17 14" fill="none" stroke="#6a6a6c" strokeWidth="1.100"><path d="M1 1h5q1.500 0 1.500 1.500v9H1zM7.500 11.500V2.500Q7.500 1 9 1h2.500M7.500 11.500H13V9M6 13.500h3M11 3l4.500 4.500M15.500 3 11 7.500" /></Glyph>
    </StatusItem>
    <StatusItem $w={859}>English (India)</StatusItem>
    <ViewButton $w={36.5} $on><Glyph $w={14} $h={13} viewBox="0 0 14 13"><path d="M0 0h14v13H0z" fill="#fff" /><path d="M2 2.500h10M2 5h10M2 7.500h10M2 10h10" stroke="#8a898c" /></Glyph></ViewButton>
    <ViewButton $w={33}><Glyph $w={16} $h={14} viewBox="0 0 16 14" fill="none" stroke="#6a6a6c"><path d="M1 .5h10v11H1zM3 3h6M3 5.500h6M3 8h4" /><circle cx="11.500" cy="9.500" r="4" fill="#77767a" /><path d="M9 9q2-2 3 0t2 1" stroke="#ddd" /></Glyph></ViewButton>
    <ViewButton $w={39}><Glyph $w={14} $h={12} viewBox="0 0 14 12" stroke="#6a6a6c" strokeWidth="1.200"><path d="M0 1h2M4 1h7M3 4.300h2M7 4.300h7M3 7.700h2M7 7.700h6M6 11h8" /></Glyph></ViewButton>
    <ViewButton $w={32}><Glyph $w={15} $h={12} viewBox="0 0 15 12" stroke="#5e5e60" strokeWidth="1.200"><path d="M0 1h14M0 4.300h10M0 7.700h14M0 11h11" /></Glyph></ViewButton>
    <Zoom>
      <Glyph $w={9} $h={9} viewBox="0 0 9 9"><path d="M0 4.500h8" stroke="#555" strokeWidth="1.800" /></Glyph>
      <ZoomTrack>
        <ZoomThumb />
        <Pointer $w={9} $h={12} viewBox="0 0 9 12"><path d="M0 0v14l9-3z" fill="#000" /></Pointer>
      </ZoomTrack>
      <Glyph $w={9} $h={9} viewBox="0 0 9 9"><path d="M0 4.500h9M4.500 0v9" stroke="#555" strokeWidth="1.600" /></Glyph>
      <ZoomText>150%</ZoomText>
    </Zoom>
  </StatusBar>
);

const line = { fill: 'none', stroke: 'currentColor' } as const;

const WindowsTaskbar = () => (
  <Taskbar>
    <SystemButtons>
      <AppSlot><Glyph $w={20} viewBox="1 0 20 20" fill="#fff"><path d="M0 3l8.500-1.200v7.700H0zM9.500 1.600 20 0v9.500H9.500zM0 10.500h8.500v7.700L0 17zM9.500 10.500H20V20L9.500 18.400z" /></Glyph></AppSlot>
      <AppSlot><Glyph $w={20} viewBox="1 0 20 20" {...line} strokeWidth="1.500"><circle cx="12.800" cy="7.200" r="6.500" /><path d="M8.200 11.800.5 19.500" /></Glyph></AppSlot>
      <AppSlot><Glyph $w={20} viewBox="1 0 20 20" {...line} strokeWidth="2.500"><circle cx="10" cy="10" r="8.400" /></Glyph></AppSlot>
      <AppSlot><Glyph $w={20} viewBox="1 0 20 20" {...line} strokeWidth="1.400"><path d="M.7 0v3.500h12.600V0M.7 20v-3.500h12.600V20M.7 6h12.600v8H.7zM18.500 0v4M18.500 10v10" /><path d="M17 5.500h3v3h-3z" fill="#fff" stroke="none" /></Glyph></AppSlot>
    </SystemButtons>
    <Apps>
      <AppSlot>
        <Glyph $w={20} viewBox="0 0 20 20">
          <defs><linearGradient id="edgeTop" x1="0" x2="1"><stop offset="0" stopColor="#2b9fe6" /><stop offset="1" stopColor="#5fd65a" /></linearGradient></defs>
          <circle cx="10" cy="10" r="10" fill="#1668b8" />
          <path d="M0 9.500C.5 4 5 0 10 0c6 0 10 4.500 10 8.500 0 3-2.200 5-5 5-2.500 0-3.800-1-3-2.200 1.600-2.300-.5-5.300-4-5.300C4 6 1 7.500 0 9.500z" fill="url(#edgeTop)" />
          <path d="M7.500 9.500c-2 4 1 9.500 6.500 8.500 2-.4 3.500-1.500 4.500-3-4 2-8.500 1-8.500-3.500z" fill="#0c4a94" />
        </Glyph>
      </AppSlot>
      <AppSlot><Glyph $w={19} viewBox="0 0 19 19"><path d="M0 1.500h7l2 2.500h10v13H0z" fill="#f9cf4e" /><path d="M0 1.500h7l1 2H0z" fill="#d99a12" /><path d="M3.500 18.500v-8h12v8h-3.500v-4H7v4z" fill="#3e96e0" /></Glyph></AppSlot>
      <AppSlot><Glyph $w={19} $h={20} viewBox="0 0 19 20"><path d="M5.500 5V1.500Q5.500.7 6.300.7h6.400q.8 0 .8.800V5" fill="none" stroke="#ddd" strokeWidth="1.400" /><path d="M0 5h19v14.200q0 .8-.8.800H.8q-.8 0-.8-.8z" fill="#f2f2f2" /><path d="M5.500 8.500H9V12H5.500z" fill="#e8482a" /><path d="M10 8.500h3.500V12H10z" fill="#7cb82f" /><path d="M5.500 13H9v3.500H5.500z" fill="#2a9fe0" /><path d="M10 13h3.500v3.500H10z" fill="#f5b51c" /></Glyph></AppSlot>
      <AppSlot><Glyph $w={18} $h={14} viewBox="0 0 18 14"><rect width="18" height="14" rx="1" fill="#5db9ec" /><rect x="1" y="1" width="16" height="12" fill="#bfe4f9" /><circle cx="6" cy="5.500" r="3" fill="#2c86cc" /><path d="M6 5.500v-3a3 3 0 0 1 3 3z" fill="#fff" /><path d="M11 3h2M11 5.500h2M14 3h2M14 5.500h2M14 8h2" stroke="#1c6fb5" strokeWidth="1.300" /><path d="M3 11h5" stroke="#f39a1c" strokeWidth="1.400" /><path d="M9 11h6" stroke="#1c6fb5" strokeWidth="1.400" /></Glyph></AppSlot>
      <AppSlot $run><Glyph $w={17} $h={20} viewBox="0 0 17 20"><path d="M4 0h9l1.500 2 1.500 0 1 3-1.500 9.500L8.500 20 1.500 14.500 0 5l1-3h1.500z" fill="#f4502a" /><path d="M4.500 4.500 8.500 4l4 .5 1.500 3-2.500 3.500.5 2-3.500 3.500L5 13l.5-2L3 7.500z" fill="#fff" /><path d="M5 7.500l2.500 1M12 7.500l-2.500 1M8.500 9v3M7 13.200l1.500-.8 1.500.8" stroke="#f4502a" strokeWidth="1.100" fill="none" /></Glyph></AppSlot>
      <AppSlot><Glyph $w={16} $h={18} viewBox="0 0 16 18"><path d="M1.500 0h13q1.500 0 1.500 1.500V18l-3.500-3h-11Q0 15 0 13.500v-12Q0 0 1.500 0z" fill="#7283cc" /><path d="M5 4.500q3-1 6 0 2 2.500 2 6-1.500 1.200-2.500 1.200l-.7-1.200H6.200l-.7 1.200Q4.500 11.700 3 10.500q0-3.500 2-6z" fill="#fff" /><circle cx="6" cy="8.300" r="1.100" fill="#7283cc" /><circle cx="10" cy="8.300" r="1.100" fill="#7283cc" /></Glyph></AppSlot>
      <AppSlot $run><Telegram s={18} /></AppSlot>
      <AppSlot $run><Disc $s={19} $bg="#fff"><Disc $s={17} $bg="#2fc351"><FaWhatsapp size={14} /></Disc></Disc></AppSlot>
      <AppSlot><Glyph $w={20} viewBox="0 0 20 20"><path d="M15 0l5 2.300v15.400L15 20z" fill="#2ba6f0" /><path d="M15 0v5.500L2.500 15.500.5 14 .5 13z" fill="#1a8ad8" /><path d="M15 20v-5.500L2.500 4.500.5 6v1z" fill="#0f78c4" /></Glyph></AppSlot>
      <AppSlot><Dragon /></AppSlot>
      <AppSlot $run><SquareIcon $s={19} $bg="#2f3b45"><Glyph $w={12} $h={14} viewBox="0 0 12 14"><path d="M3 0l4 3.500L3.500 7 0 3.500z" fill="#fff" /><path d="M7.500 4 12 8l-7 6-3.500-3L5.500 7.500z" fill="#4fe0c0" /></Glyph></SquareIcon></AppSlot>
      <AppSlot $run><Glyph $w={20} viewBox="-10 -10 20 20"><circle r="6.600" fill="none" stroke="#8f9aa3" strokeWidth="4" />{[0, 45, 90, 135, 180, 225, 270, 315].map(a => <rect key={a} transform={`rotate(${a})`} x="-2" y="-10" width="4" height="4" fill="#8f9aa3" />)}<circle r="4.600" fill="#f2f5f7" /><circle r="3" fill="#1c72c4" /></Glyph></AppSlot>
      <AppSlot $active><TeamsLogo /></AppSlot>
    </Apps>
    <People><Glyph $w={18} $h={20} viewBox="0 0 18 20" fill="none" stroke="#fff" strokeWidth="1.400"><circle cx="12.500" cy="3.800" r="3" /><circle cx="5" cy="11" r="2.800" /><path d="M8 11.500Q8.500 7.500 12.500 7.500t4.800 4M.7 19.500Q.8 14.500 5 14.500t4.500 5" /></Glyph></People>
    <Weather><Sun />31°C<Forecast>Mostly s...</Forecast></Weather>
    <Tray>
      <AppSlot><Glyph $w={16} $h={17} viewBox="0 0 16 17" fill="none" stroke="#4a74f5" strokeWidth="2.800" strokeLinecap="round"><path d="M1.500 13V5q0-3.500 2.700-3.500T7 5.500L9 12q.6 3 3 3t2.500-3.500V4" /></Glyph></AppSlot>
      <AppSlot><Glyph $w={15} $h={18} viewBox="0 0 15 18" {...line} strokeWidth="1.300"><rect x=".7" y="4.500" width="10" height="9" rx="2" /><path d="M10.700 8 14.300 6v6l-3.600-2M3 2Q6 0 9 2M3 16q3 2 6 0" /></Glyph></AppSlot>
      <AppSlot><Dragon /></AppSlot>
      <AppSlot><SquareIcon $s={20} $bg="#1c1f1a" $c="#74b71b"><SiNvidia size={15} /></SquareIcon></AppSlot>
      <AppSlot><Glyph $w={15} $h={20} viewBox="0 0 15 20" fill="#e23a35"><path d="M0 3l3.500 0 4 8.500L11.500 3H15v4L7.500 20 0 7z" /><path d="M5.500 0h4v5L7.500 8.500l-2-3.500z" /></Glyph></AppSlot>
      <AppSlot><Glyph $w={20} viewBox="0 0 20 20"><rect x=".5" y=".5" width="19" height="19" fill="#333" stroke="#aaa" /><path d="M2.500 4h15M2.500 7h15M2.500 10h15M2.500 13h15M2.500 16h15" stroke="#b5b5b5" strokeWidth="1.600" /></Glyph></AppSlot>
      <AppSlot><Badged><TeamsLogo /><Badge $bg="#d13438" $s={9} /></Badged></AppSlot>
      <AppSlot><SquareIcon $s={20} $bg="#27336b" $r={4} $fs={22}><Glyph $w={9} $h={6} viewBox="0 0 9 6" fill="#fff"><path d="M1.500 0H4L2.500 6H0zM6.500 0H9L7.500 6H5z" /></Glyph></SquareIcon></AppSlot>
      <AppSlot><Badged><Telegram s={18} /><Badge $bg="#6c7a86" $s={11}>..7</Badge></Badged></AppSlot>
      <AppSlot><SquareIcon $s={17} $bg="#f6b613" $r={3}><Glyph $w={11} $h={17} viewBox="0 0 11 17"><rect width="11" height="17" rx="4" fill="#2a2418" /><path d="M3.500 3Q5.500 1 7.500 3L8.500 13q-3 3-6 0z" fill="#b9b2a2" /><circle cx="5.500" cy="10" r="2" fill="#222" /></Glyph></SquareIcon></AppSlot>
      <AppSlot><Glyph $w={13} $h={20} viewBox="0 0 13 20"><rect x="2" y="0" width="9" height="14" rx="2" fill="#fff" /><path d="M.7 11v3q0 2 2 2h7.600q2 0 2-2v-3M6.500 16v3.300M3 19.300h7" fill="none" stroke="#fff" strokeWidth="1.300" /></Glyph></AppSlot>
      <AppSlot><Badged><FaDiscord size={18} /><Badge $bg="#ee3d3f" $s={8} $top /></Badged></AppSlot>
      <AppSlot><SquareIcon $s={20} $bg="#3a9c3c" $r={2} $fs={17}>Q</SquareIcon></AppSlot>
      <AppSlot><Epic>EPIC<small>GAMES</small></Epic></AppSlot>
      <AppSlot><Disc $s={20} $bg="linear-gradient(#14203c, #1b6fa8)"><FaSteamSymbol size={17} /></Disc></AppSlot>
      <AppSlot><Glyph $w={19} viewBox="0 0 19 19" fill="none" stroke="#fff"><circle cx="10" cy="11" r="6" strokeWidth="3" /><circle cx="10" cy="11" r="1.800" fill="#fff" stroke="none" /><path d="M7 2.500h6M1 6l3 2.500" strokeWidth="2.500" /></Glyph></AppSlot>
      <AppSlot><Glyph $w={17} $h={18} viewBox="0 0 17 18" {...line} strokeWidth="1.300"><path d="M1 17Q1.500 3 16 1M5 17Q5.500 7 16 5.500M9 17Q9.500 11 16 10" /><circle cx="14.500" cy="15.500" r="1.700" fill="#fff" stroke="none" /></Glyph></AppSlot>
      <AppSlot><Badged><Glyph $w={17} $h={18} viewBox="0 0 17 18"><circle cx="6" cy="8" r="5" fill="#e8e8ea" /><circle cx="11" cy="9" r="5" fill="#c9c9cc" /><circle cx="4" cy="10" r="4" fill="#d9d9dc" /></Glyph><Badge $bg="#d8232f" $s={11}>✕</Badge></Badged></AppSlot>
      <AppSlot><Badged><Glyph $w={18} $h={20} viewBox="0 0 18 20"><path d="M9 0q4.500 2.500 9 2.800V9q0 7-9 11Q0 16 0 9V2.800Q4.500 2.500 9 0z" fill="#2aa3e8" /><path d="M9 0Q4.500 2.500 0 2.800V10h9z" fill="#56c0f4" /></Glyph><Badge $bg="#16a02c" $s={11}>✓</Badge></Badged></AppSlot>
      <AppSlot><SquareIcon $s={14} $bg="#0a7cf2" $r={7}><FaBluetoothB size={14} /></SquareIcon></AppSlot>
      <AppSlot><Glyph $w={20} $h={14} viewBox="0 0 20 14" {...line} strokeWidth="1.300"><path d="M6.500 3h11v9h-11v-4M17.500 5.500h1.800v4h-1.800M1 0v2.500M4 0v2.500M.3 2.500h4.400v2.500q0 1.500-2.200 1.500T.3 5zM2.500 6.500V11q0 1 1 1h3" /></Glyph></AppSlot>
      <AppSlot><Glyph $w={20} $h={16} viewBox="0 0 20 16" {...line} strokeWidth="1.300"><path d="M1 5.500h2.500L7.500 1v14l-4-4.500H1zM10.500 5q2 3 0 6M13.500 3q3.500 5 0 10" /><path d="M16.500 1q5 7 0 14" stroke="#8a8a94" /></Glyph></AppSlot>
    </Tray>
    <Pen><Glyph $w={20} viewBox="0 0 20 20" {...line} strokeWidth="1.400"><path d="M7.500 12.500 15 1.500q1.500-1.500 3 0t.5 3L10.500 15l-3.500 1.500zM8 8q-2-1.500-4 .5T.8 14.500Q.5 19 4 19t4.500-5M11 14q1.500 1.500 3-.5t1.500-3.500q1 1.500 4 .5" /></Glyph></Pen>
    <Lang>ENG</Lang>
    <Time>04:12 PM</Time>
    <Notify><Glyph $w={20} viewBox="0 0 20 20" {...line} strokeWidth="1.400"><path d="M.7 1h18.600v15h-6L10 19l-3.300-3h-6z" /></Glyph></Notify>
  </Taskbar>
);

export default function App() {
  return (
    <Screen>
      <Global />
      <TitleBar>
        <WindowTitle>Chatbot Test Report Discussion</WindowTitle>
        <WindowButtons>
          <Glyph $w={16} viewBox="0 0 16 16"><path d="M0 7.500h16" stroke="#fff" strokeWidth="1.300" /></Glyph>
          <Glyph $w={17} $h={18} viewBox="0 0 17 18" fill="none" stroke="#fff" strokeWidth="1.300"><path d="M.7 3.500h12.600v13.800H.7zM3.500 3.500V.7h12.800v13.800h-3" /></Glyph>
          <Glyph $w={13} $h={13} viewBox="0 0 13 13"><path d="M0 0l13 13M13 0 0 13" stroke="#fff" strokeWidth="1.300" /></Glyph>
        </WindowButtons>
      </TitleBar>
      <Toolbar>
        <Clock>17:32</Clock>
        <RequestButton>Request control</RequestButton>
        <Divider $l={42} $r={14} />
        <ToolCell $w={60.5}><Glyph $w={20} $h={22} viewBox="0 0 20 22" {...line} strokeWidth="1.500"><circle cx="4.500" cy="6" r="2.900" /><circle cx="14.500" cy="4" r="3.200" /><path d="M9.500 10h9.700v8q0 3-3 3h-3.700q-3 0-3-3zM6.500 12H.8v6q0 3 3 3h3" /></Glyph></ToolCell>
        <ToolCell $w={61.5}><Glyph $w={20} $h={22} viewBox="0 0 20 22" {...line} strokeWidth="1.500"><path d="M3 1h14.500q1.700 0 1.700 1.700V21l-4-4H3q-2 0-2-2V3q0-2 2-2zM5.500 6.500h9M5.500 11h6" /></Glyph></ToolCell>
        <ToolCell $w={58.5}><Glyph $w={22} $h={25} viewBox="0 0 22 25" {...line} strokeWidth="1.500" strokeLinejoin="round" strokeLinecap="round"><path d="M2.500 14V5.500q0-1.700 1.500-1.700t1.500 1.700V12V3q0-1.700 1.600-1.700T8.700 3v8.500V2.500Q8.700 1 10.300 1t1.600 1.500v9V4.500q0-1.600 1.500-1.600T15 4.500v11q2-4 4.200-4 1.600.3 1.300 1.800-1 2.200-3 5.500-2.500 5.400-7.500 5.400-7.500 0-7.500-7.200z" /></Glyph></ToolCell>
        <ToolCell $w={61}><Glyph $w={26} $h={7} viewBox="0 0 26 7" fill="currentColor"><circle cx="3.500" cy="3.500" r="3.200" /><circle cx="13" cy="3.500" r="3.200" /><circle cx="22.500" cy="3.500" r="3.200" /></Glyph></ToolCell>
        <Divider $l={15} $r={15.5} />
        <ToolCell $w={60} $c="#fff">
          <Glyph $w={26} $h={24} viewBox="0 0 26 24"><rect x="0" y="3.500" width="17" height="17" rx="2.500" fill="#fff" /><path d="M18.500 9.500 24 5q1.500-.8 1.500.8v12.400q0 1.600-1.500.8l-5.500-4.500z" fill="#fff" /><path d="M24 0 2 24" stroke="#1f1f1f" strokeWidth="4.500" /><path d="M25 0 1 23.500" stroke="#fff" strokeWidth="1.700" /></Glyph>
        </ToolCell>
        <ToolCell $w={60}>
          <MicOff size={25} c="#a6a7dc" />
          <Tooltip>Unmute (Ctrl+Shift+M)</Tooltip>
        </ToolCell>
        <ToolCell $w={60} $c="#fff"><Glyph $w={26} $h={23} viewBox="0 0 26 23" {...line} strokeWidth="1.800"><path d="M9 18.500H3.500q-2.500 0-2.500-2.500V3.500Q1 1 3.500 1h19Q25 1 25 3.500V16q0 2.500-2.500 2.500H17" /><path d="M13 22.500V7M8 11.500l5-5 5 5" strokeWidth="2.200" /></Glyph></ToolCell>
        <LeaveButton>
          <Glyph $w={25} $h={10} viewBox="0 0 25 10"><path d="M12.500 0C18 0 22 1.800 24 4.500c1 1.500 1 3 .4 4.500-.3.800-1 1-1.800.8l-4-1c-.8-.2-1.200-.7-1.300-1.500L17 5q-4.500-1.500-9 0l-.3 2.300c-.1.800-.5 1.300-1.300 1.500l-4 1c-.8.200-1.500 0-1.800-.8C0 7.500 0 6 1 4.500 3 1.800 7 0 12.500 0z" fill="#fff" /></Glyph>
          Leave
        </LeaveButton>
      </Toolbar>
      <StageWrap>
        <Stage>
          <PresenterName>Chockalingam Muthian</PresenterName>
          <Word>
            <WordHeader />
            <RibbonBar />
            <Canvas>
              <Page>
                <Excerpt><ExcerptText>{EXCERPT.map(t => <div key={t}>{t}</div>)}</ExcerptText></Excerpt>
                <Hairline $w={569} />
                <Heading $top={21}>Loss of Education Certificate</Heading>
                <Chat>
                  <Message $user><Bubble $user $w={355.5}>What are the supporting document for loss<br />of education</Bubble><Person /></Message>
                  <BotReply />
                  <Message $user><Bubble $user $w={334.5}>document for loss of education certificate</Bubble><Person /></Message>
                  <BotReply />
                </Chat>
                <Hairline $w={594} />
                <Heading $top={16} $caret>No Graduation Certificate</Heading>
              </Page>
            </Canvas>
            <WordStatus />
          </Word>
        </Stage>
      </StageWrap>
      <Strip>
        {PEOPLE.map(p => (
          <Tile key={p.n} $bg={p.tile}>
            <Initials $bg={p.bg} $c={p.c} $ring={p.ring}>{p.i}</Initials>
            <TileName>{p.n}{p.muted && <MicOff size={16} c="#e6e6e6" />}</TileName>
          </Tile>
        ))}
      </Strip>
      <WindowsTaskbar />
    </Screen>
  );
}
